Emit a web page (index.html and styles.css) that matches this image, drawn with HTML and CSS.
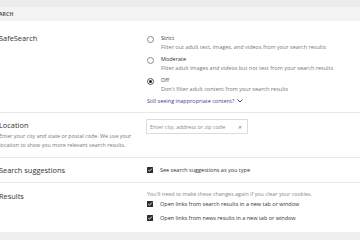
FILE: index.html
```html
<!DOCTYPE html>
<html lang="en">
<head>
    <meta charset="UTF-8">
    <meta name="viewport" content="width=device-width, initial-scale=1.0">
    <title>Settings - Search</title>
    <link rel="stylesheet" href="styles.css">
</head>
<body>
<div class="top-band"></div>

<!-- Section header -->
<div class="section-head">
    <span class="section-title">Search</span>
</div>

<div class="page">
    <!-- SafeSearch -->
    <div class="row safe-row">
        <div class="row-title">SafeSearch</div>
        <div class="row-body">
            <div class="option">
                <span class="radio"></span>
                <div class="option-text">
                    <div class="option-label">Strict</div>
                    <div class="option-desc">Filter out adult text, images, and videos from your search results</div>
                </div>
            </div>
            <div class="option">
                <span class="radio"></span>
                <div class="option-text">
                    <div class="option-label">Moderate</div>
                    <div class="option-desc">Filter adult images and videos but not text from your search results</div>
                </div>
            </div>
            <div class="option">
                <span class="radio checked"></span>
                <div class="option-text">
                    <div class="option-label">Off</div>
                    <div class="option-desc">Don't filter adult content from your search results</div>
                </div>
            </div>
            <a class="more-link" href="#">Still seeing inappropriate content?
                <svg class="chevron" width="6" height="4" viewBox="0 0 6 4"><path d="M0.6 0.6 L3 3 L5.4 0.6" fill="none" stroke="currentColor" stroke-width="1"/></svg>
            </a>
        </div>
    </div>

    <!-- Location -->
    <div class="row location-row">
        <div class="row-title-wrap">
            <div class="row-title">Location</div>
            <div class="row-desc">Enter your city and state or postal code. We use your location to show you more relevant search results.</div>
        </div>
        <div class="row-body">
            <div class="location-input">
                <span class="placeholder">Enter city, address or zip code</span>
                <span class="clear">&#x2715;</span>
            </div>
        </div>
    </div>

    <!-- Search suggestions -->
    <div class="row suggest-row">
        <div class="row-title">Search suggestions</div>
        <div class="row-body">
            <div class="check-line">
                <span class="checkbox"><svg width="6" height="6" viewBox="0 0 6 6"><path d="M1.3 3.1 L2.5 4.2 L4.8 1.6" fill="none" stroke="#fff" stroke-width="0.9"/></svg></span>
                <span class="check-label">See search suggestions as you type</span>
            </div>
        </div>
    </div>

    <!-- Results -->
    <div class="row results-row">
        <div class="row-title">Results</div>
        <div class="row-body">
            <div class="note">You'll need to make these changes again if you clear your cookies.</div>
            <div class="check-line">
                <span class="checkbox"><svg width="6" height="6" viewBox="0 0 6 6"><path d="M1.3 3.1 L2.5 4.2 L4.8 1.6" fill="none" stroke="#fff" stroke-width="0.9"/></svg></span>
                <span class="check-label">Open links from search results in a new tab or window</span>
            </div>
            <div class="check-line">
                <span class="checkbox"><svg width="6" height="6" viewBox="0 0 6 6"><path d="M1.3 3.1 L2.5 4.2 L4.8 1.6" fill="none" stroke="#fff" stroke-width="0.9"/></svg></span>
                <span class="check-label">Open links from news results in a new tab or window</span>
            </div>
        </div>
    </div>
</div>

<div class="bottom-band"></div>
</body>
</html>
```

FILE: styles.css
```css
/* Page */
body {
    margin: 0;
    background-color: #fff;
    font-family: 'Open Sans', 'Noto Sans', sans-serif;
    color: #444;
    overflow: hidden;
    width: 360px;
    height: 240px;
}

.top-band {
    height: 7px;
    background-color: #ececec;
}

/* Section header */
.section-head {
    height: 14px;
    background-color: #f3f3f3;
    display: flex;
    align-items: center;
}

.section-title {
    margin-left: -7px;
    font-size: 5px;
    font-weight: 700;
    text-transform: uppercase;
    letter-spacing: 0.2px;
    color: #555;
}

.page {
    margin-left: -1px;
}

/* Rows */
.row {
    display: grid;
    grid-template-columns: 148px 1fr;
    border-bottom: 1px solid #e8e8e8;
}

.row-title {
    font-size: 7.4px;
    line-height: 10px;
    color: #333;
}

.row-desc {
    font-size: 5.4px;
    line-height: 9.5px;
    color: #777;
    padding-right: 10px;
    margin-top: 1.5px;
}

.safe-row {
    padding: 12px 0 6px;
}

.location-row {
    padding: 6px 0 6px;
}

.location-row .row-title-wrap {
    padding-top: 1px;
}

.suggest-row {
    padding: 7px 0 7px;
}

.results-row {
    padding: 8px 0 9px;
    border-bottom: none;
}

/* Radio options */
.option {
    display: flex;
    gap: 7px;
    margin-bottom: 2px;
}

.radio {
    flex: none;
    width: 5px;
    height: 5px;
    margin-top: 2.5px;
    border: 0.7px solid #8a8a8a;
    border-radius: 50%;
    box-sizing: content-box;
    position: relative;
}

.radio.checked {
    border-color: #555;
}

.radio.checked::after {
    content: "";
    position: absolute;
    left: 1px;
    top: 1px;
    width: 3px;
    height: 3px;
    border-radius: 50%;
    background-color: #222;
}

.option-label {
    font-size: 5.5px;
    line-height: 10px;
    color: #333;
}

.option-desc {
    font-size: 5.5px;
    line-height: 9px;
    color: #777;
    white-space: nowrap;
}

.more-link {
    display: flex;
    align-items: center;
    gap: 3px;
    font-size: 5.5px;
    line-height: 10px;
    color: #43418f;
    text-decoration: none;
}

.chevron {
    color: #43418f;
}

/* Location input */
.location-input {
    width: 102px;
    height: 15px;
    box-sizing: border-box;
    border: 1px solid #dcdcdc;
    display: flex;
    align-items: center;
    justify-content: space-between;
    padding: 0 5px 0 3px;
    margin-left: -1px;
}

.placeholder {
    font-size: 5.4px;
    color: #8a8a8a;
}

.clear {
    font-size: 5px;
    color: #777;
}

/* Checkboxes */
.check-line {
    display: flex;
    align-items: center;
    gap: 7px;
    height: 10px;
}

.results-row .check-line + .check-line {
    margin-top: 4px;
}

.checkbox {
    flex: none;
    width: 6px;
    height: 6px;
    background-color: #2b2b2b;
    border-radius: 0.5px;
    display: flex;
}

.check-label {
    font-size: 5.5px;
    color: #333;
    white-space: nowrap;
}

.note {
    font-size: 5.4px;
    line-height: 9px;
    color: #888;
    margin-top: -0.5px;
}

.bottom-band {
    height: 10px;
    background-color: #efefef;
}
```
